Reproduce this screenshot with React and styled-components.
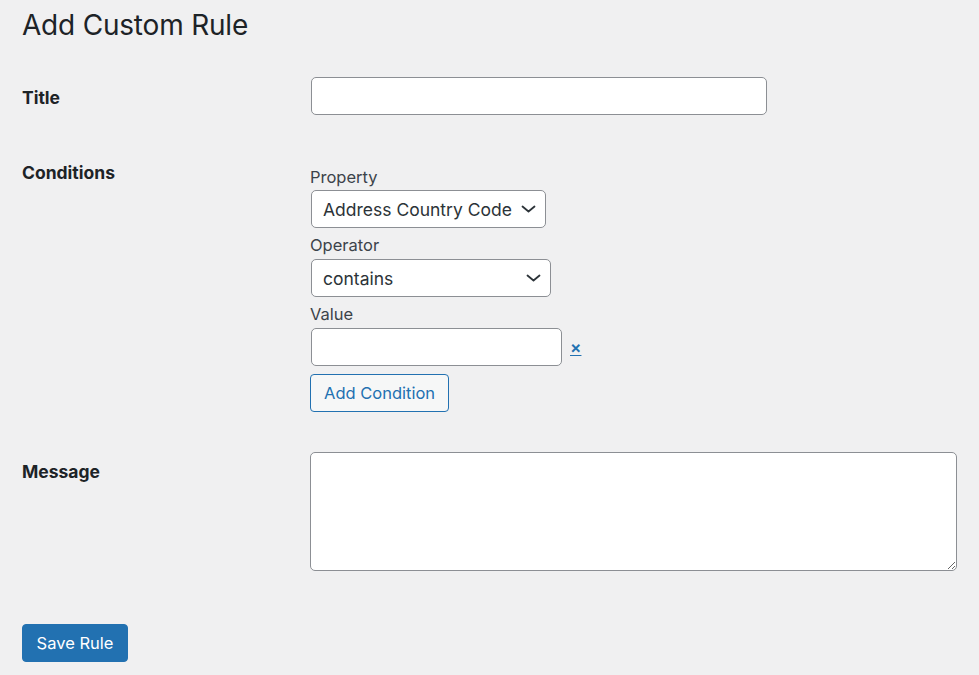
import styled, { createGlobalStyle } from "styled-components";

const GlobalStyle = createGlobalStyle`
  html, body {
    margin: 0;
    padding: 0;
    background: #f0f0f1;
  }
  body {
    font-family: Inter, "Liberation Sans", sans-serif;
    color: #3c434a;
  }
`;

const Page = styled.div`
  padding: 7px 22px 20px 22px;
`;

const Heading = styled.h1`
  margin: 0;
  font-size: 28px;
  font-weight: 400;
  line-height: 36px;
  color: #1d2327;
  letter-spacing: -0.2px;
`;

const Row = styled.div`
  display: flex;
  align-items: flex-start;
  margin-top: ${(p) => p.$top}px;
`;

const RowLabel = styled.label`
  width: 288px;
  flex-shrink: 0;
  padding-top: ${(p) => p.$pad || 0}px;
  font-size: 17.5px;
  line-height: 22px;
  font-weight: 700;
  color: #1d2327;
`;

const Field = styled.div`
  display: flex;
  flex-direction: column;
  align-items: flex-start;
  padding-top: ${(p) => p.$pad || 0}px;
`;

const SubLabel = styled.label`
  font-size: 16.5px;
  line-height: 22px;
  color: #3c434a;
  margin-top: ${(p) => p.$top || 0}px;
  margin-bottom: ${(p) => p.$bottom || 2}px;
`;

const TextInput = styled.input`
  box-sizing: border-box;
  width: ${(p) => p.$w}px;
  height: 38px;
  margin-left: 1px;
  border: 1px solid #8c8f94;
  border-radius: 5px;
  background: #fff;
  font: inherit;
  font-size: 16.5px;
  padding: 0 10px;
  outline: none;
`;

const SelectWrap = styled.div`
  position: relative;
  margin-left: 1px;
`;

const Select = styled.select`
  box-sizing: border-box;
  width: ${(p) => p.$w}px;
  height: 38px;
  appearance: none;
  -webkit-appearance: none;
  border: 1px solid #8c8f94;
  border-radius: 5px;
  background: #fff;
  font-family: inherit;
  font-size: 17.5px;
  color: #2c3338;
  padding: 0 30px 0 11px;
  outline: none;
`;

const Chevron = styled.svg`
  position: absolute;
  right: 10px;
  top: 15px;
  pointer-events: none;
`;

const ValueLine = styled.div`
  display: flex;
  align-items: center;
  gap: 8px;
`;

const RemoveLink = styled.a`
  color: #2271b1;
  font-size: 17px;
  font-weight: 600;
  text-decoration: underline;
  text-underline-offset: 2px;
  line-height: 1;
  cursor: pointer;
`;

const SecondaryButton = styled.button`
  box-sizing: border-box;
  margin-top: 8px;
  height: 38px;
  padding: 0 13px;
  border: 1px solid #2271b1;
  border-radius: 4px;
  background: #f6f7f7;
  color: #2271b1;
  font-family: inherit;
  font-size: 16.5px;
  cursor: pointer;
`;

const TextArea = styled.textarea`
  box-sizing: border-box;
  width: 648px;
  height: 119px;
  border: 1px solid #8c8f94;
  border-radius: 5px;
  background: #fff;
  font: inherit;
  padding: 8px 10px;
  outline: none;
`;

const PrimaryButton = styled.button`
  box-sizing: border-box;
  margin-top: 53px;
  width: 106px;
  height: 38px;
  border: 1px solid #2271b1;
  border-radius: 4px;
  background: #2271b1;
  color: #fff;
  font-family: inherit;
  font-size: 16.5px;
  cursor: pointer;
`;

const ChevronIcon = () => (
  <Chevron width="15" height="8" viewBox="0 0 15 8">
    <path d="M1.5 1.5 L7.5 6.5 L13.5 1.5" fill="none" stroke="#2c3338" strokeWidth="1.8" strokeLinecap="round" strokeLinejoin="round" />
  </Chevron>
);

export default function App() {
  return (
    <>
      <GlobalStyle />
      <Page>
        <Heading>Add Custom Rule</Heading>

        <Row $top={34}>
          <RowLabel $pad={10}>Title</RowLabel>
          <TextInput type="text" $w={456} />
        </Row>

        <Row $top={46}>
          <RowLabel $pad={1}>Conditions</RowLabel>
          <Field $pad={5}>
            <SubLabel>Property</SubLabel>
            <SelectWrap>
              <Select $w={235} defaultValue="country">
                <option value="country">Address Country Code</option>
              </Select>
              <ChevronIcon />
            </SelectWrap>
            <SubLabel $top={6} $bottom={3}>Operator</SubLabel>
            <SelectWrap>
              <Select $w={240} defaultValue="contains">
                <option value="contains">contains</option>
              </Select>
              <ChevronIcon />
            </SelectWrap>
            <SubLabel $top={6} $bottom={3}>Value</SubLabel>
            <ValueLine>
              <TextInput type="text" $w={251} />
              <RemoveLink>×</RemoveLink>
            </ValueLine>
            <SecondaryButton>Add Condition</SecondaryButton>
          </Field>
        </Row>

        <Row $top={40}>
          <RowLabel $pad={9}>Message</RowLabel>
          <TextArea />
        </Row>

        <PrimaryButton>Save Rule</PrimaryButton>
      </Page>
    </>
  );
}
